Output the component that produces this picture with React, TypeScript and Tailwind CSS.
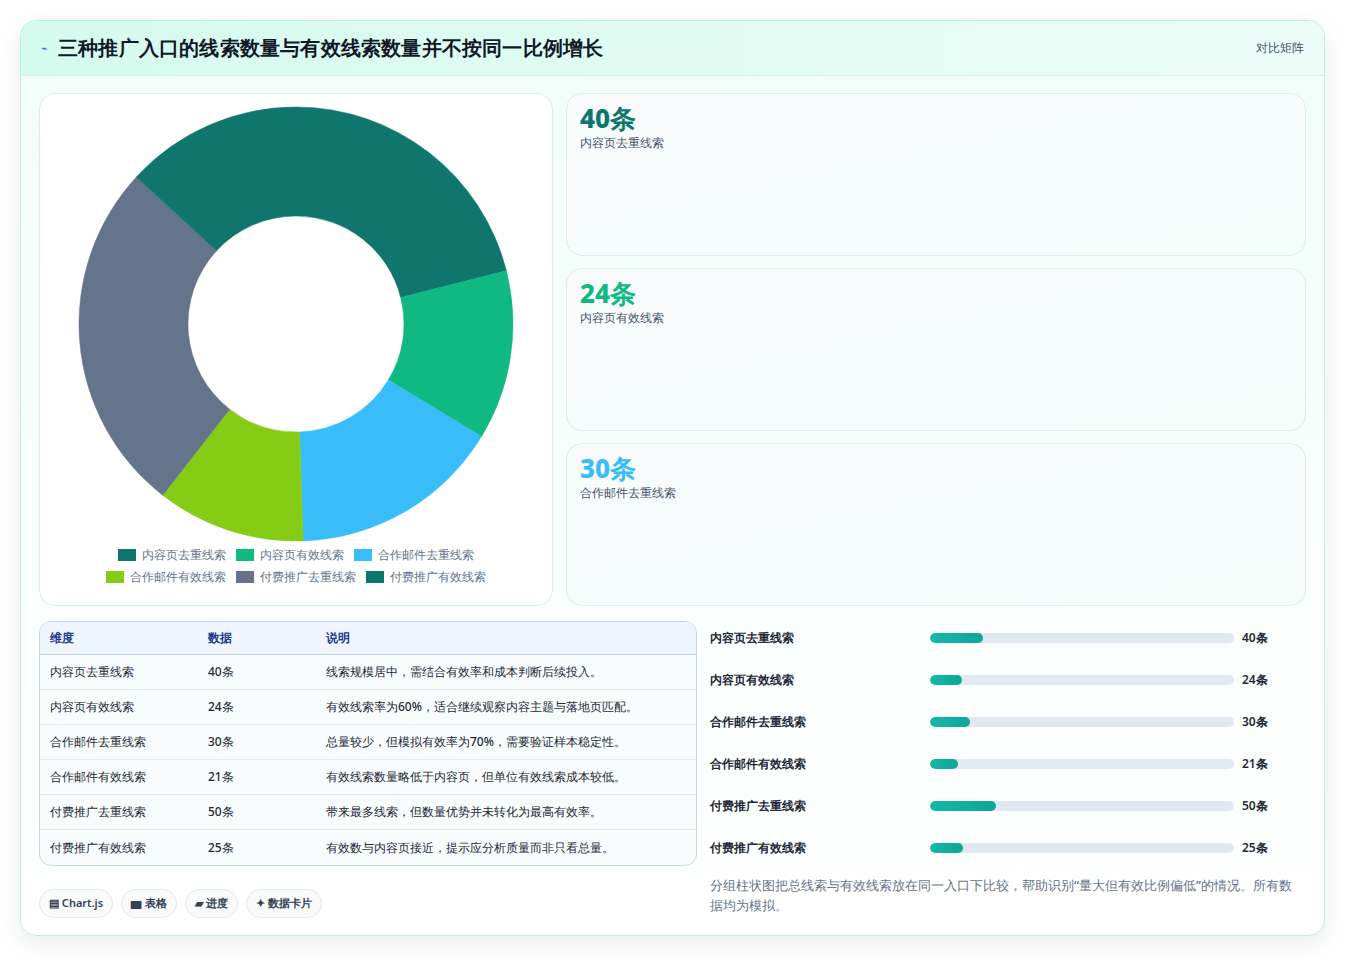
import React from 'react';

const data = [
  { label: '内容页去重线索', v: 40, color: '#0f766e', note: '线索规模居中，需结合有效率和成本判断后续投入。' },
  { label: '内容页有效线索', v: 24, color: '#10b981', note: '有效线索率为60%，适合继续观察内容主题与落地页匹配。' },
  { label: '合作邮件去重线索', v: 30, color: '#38bdf8', note: '总量较少，但模拟有效率为70%，需要验证样本稳定性。' },
  { label: '合作邮件有效线索', v: 21, color: '#84cc16', note: '有效线索数量略低于内容页，但单位有效线索成本较低。' },
  { label: '付费推广去重线索', v: 50, color: '#64748b', note: '带来最多线索，但数量优势并未转化为最高有效率。' },
  { label: '付费推广有效线索', v: 25, color: '#0f766e', note: '有效数与内容页接近，提示应分析质量而非只看总量。' },
];

function Donut() {
  const total = data.reduce((s, d) => s + d.v, 0);
  const R = 217, r = 108, cx = 220, cy = 220;
  let a = -Math.PI / 2;
  const pt = (rad: number, ang: number) => [cx + rad * Math.cos(ang), cy + rad * Math.sin(ang)];
  return (
    <svg width="440" height="440" viewBox="0 0 440 440">
      {data.map((d, i) => {
        const a0 = a;
        const a1 = a + (d.v / total) * Math.PI * 2;
        a = a1;
        const large = a1 - a0 > Math.PI ? 1 : 0;
        const [x0, y0] = pt(R, a0), [x1, y1] = pt(R, a1), [x2, y2] = pt(r, a1), [x3, y3] = pt(r, a0);
        return (
          <path key={i} fill={d.color} stroke={d.color} strokeWidth="0.5"
            d={`M${x0} ${y0} A${R} ${R} 0 ${large} 1 ${x1} ${y1} L${x2} ${y2} A${r} ${r} 0 ${large} 0 ${x3} ${y3}Z`} />
        );
      })}
    </svg>
  );
}

const stats = [
  { v: '40条', l: '内容页去重线索', c: 'text-[#0f766e]' },
  { v: '24条', l: '内容页有效线索', c: 'text-[#10b981]' },
  { v: '30条', l: '合作邮件去重线索', c: 'text-[#38bdf8]' },
];

export default function App() {
  return (
    <div className="min-h-screen bg-white p-5 pr-5 font-['Noto_Sans_CJK_SC','Noto_Sans',sans-serif]" >
      <div className="rounded-2xl border border-[#bdeee3] bg-gradient-to-b from-[#f0fdf9] to-white shadow-[0_8px_24px_rgba(0,0,0,0.08)] overflow-hidden">
        <div className="flex items-center justify-between h-[55px] px-5 bg-gradient-to-r from-[#d5faee] to-[#ecfdf8] border-b border-[#d3f3ea]">
          <div className="flex items-center gap-[10px]">
            <span className="text-[#2563eb] text-[11px]">⌁</span>
            <h1 className="text-[20px] font-black text-[#111827] tracking-[0.2px]">三种推广入口的线索数量与有效线索数量并不按同一比例增长</h1>
          </div>
          <span className="text-[12px] text-[#475569]">对比矩阵</span>
        </div>
        <div className="px-[18px] pt-[17px] pb-[17px]">
          <div className="grid grid-cols-[514px_1fr] gap-[13px]">
            <div className="h-[513px] rounded-2xl border border-[#dcefe9] bg-white flex flex-col items-center pt-[10px]">
              <Donut />
              <div className="mt-[2px] flex flex-wrap justify-center gap-x-[10px] gap-y-[4px] w-[400px] text-[12px] leading-[18px] text-[#64748b]">
                {data.map((d) => (
                  <span key={d.label} className="flex items-center gap-[6px]">
                    <span className="w-[18px] h-[12px]" style={{ background: d.color }} />
                    {d.label}
                  </span>
                ))}
              </div>
            </div>
            <div className="flex flex-col gap-[12px]">
              {stats.map((s) => (
                <div key={s.l} className="h-[163px] rounded-2xl border border-[#dcefe9] bg-gradient-to-br from-[#f8fafc] to-[#f5fdfb] px-[13px] pt-[8px]">
                  <div className={`text-[26px] font-extrabold leading-[32px] ${s.c}`}>{s.v}</div>
                  <div className="text-[12px] text-[#475569]">{s.l}</div>
                </div>
              ))}
            </div>
          </div>
          <div className="grid grid-cols-[658px_1fr] gap-[13px] mt-[15px]">
            <div>
              <div className="rounded-xl border border-[#c7d7ea] overflow-hidden bg-[#f8fcfc] text-[12px]">
                <div className="grid grid-cols-[158px_118px_1fr] h-[33px] items-center px-[10px] bg-[#eef5ff] text-[#1e3a8a] font-semibold border-b border-[#c7d7ea]">
                  <span>维度</span><span>数据</span><span>说明</span>
                </div>
                {data.map((d, i) => (
                  <div key={d.label} className={`grid grid-cols-[158px_118px_1fr] h-[35px] items-center px-[10px] text-[#1f2937] font-medium ${i < 5 ? 'border-b border-[#e2e8f0]' : ''}`}>
                    <span>{d.label}</span><span>{d.v}条</span><span>{d.note}</span>
                  </div>
                ))}
              </div>
              <div className="flex gap-2 mt-[23px] text-[11px] text-[#334155] font-semibold">
                {['▤ Chart.js', '▆ 表格', '▰ 进度', '✦ 数据卡片'].map((t) => (
                  <span key={t} className="h-[29px] px-[9px] flex items-center rounded-full border border-[#e2e8f0] bg-[#f8fafc]">{t}</span>
                ))}
              </div>
            </div>
            <div className="-mt-[4px]">
              {data.map((d) => (
                <div key={d.label} className="h-[42px] flex items-center text-[12px] font-semibold text-[#1f2937]">
                  <span className="w-[220px]">{d.label}</span>
                  <div className="w-[304px] h-[10px] rounded-full bg-[#e2e8f0] overflow-hidden">
                    <div className="h-full rounded-full bg-gradient-to-r from-[#14b8a6] to-[#0fa59a]" style={{ width: `${d.v / 2.3}%` }} />
                  </div>
                  <span className="ml-[8px]">{d.v}条</span>
                </div>
              ))}
              <p className="mt-[6px] pr-[8px] text-[13px] leading-[20px] font-medium text-[#64748b]">分组柱状图把总线索与有效线索放在同一入口下比较，帮助识别“量大但有效比例偏低”的情况。所有数据均为模拟。</p>
            </div>
          </div>
        </div>
      </div>
    </div>
  );
}
